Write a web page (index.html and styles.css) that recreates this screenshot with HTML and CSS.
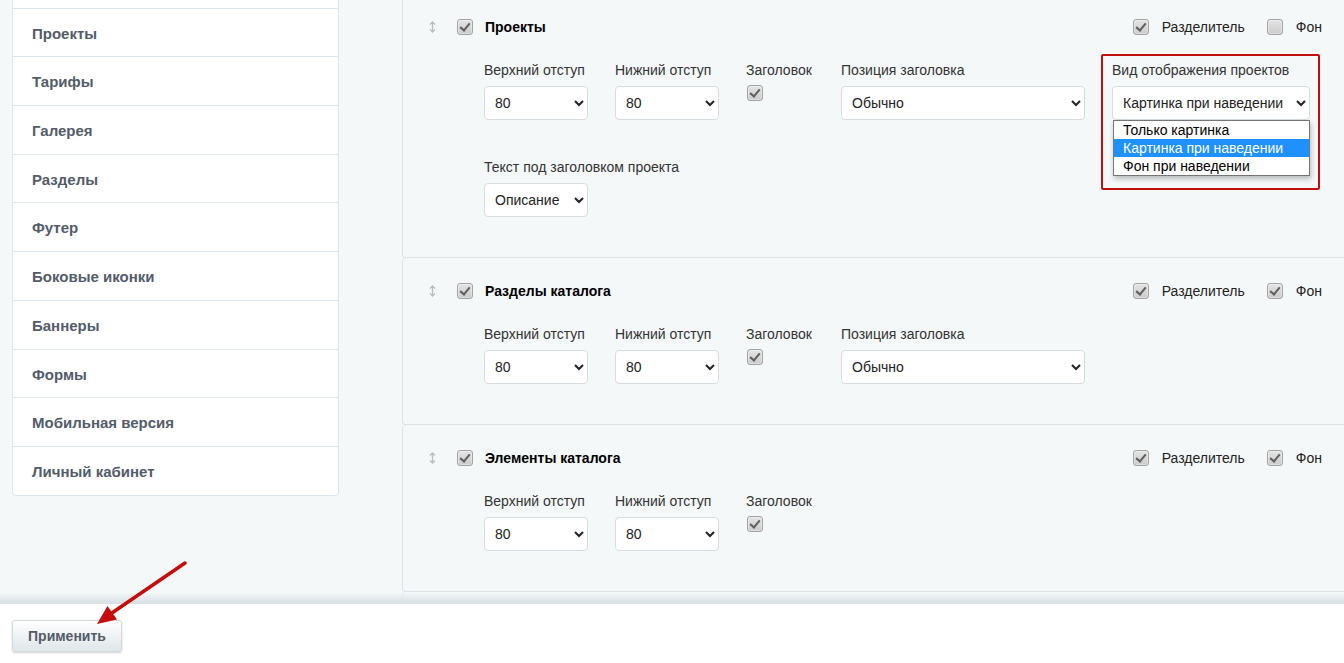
FILE: index.html
```html
<!DOCTYPE html>
<html lang="ru">
<head>
    <meta charset="UTF-8">
    <meta name="viewport" content="width=device-width, initial-scale=1.0">
    <title>Настройки блоков</title>
    <link rel="stylesheet" href="styles.css">
</head>
<body>
    <div class="workspace">
        <!-- Left menu -->
        <aside class="sidebar">
            <ul class="menu">
                <li class="menu-prev"></li>
                <li>Проекты</li>
                <li>Тарифы</li>
                <li>Галерея</li>
                <li>Разделы</li>
                <li>Футер</li>
                <li>Боковые иконки</li>
                <li>Баннеры</li>
                <li>Формы</li>
                <li>Мобильная версия</li>
                <li>Личный кабинет</li>
            </ul>
        </aside>

        <!-- Blocks list -->
        <main class="blocks">
            <section class="block">
                <div class="block-head">
                    <svg class="drag" width="7" height="12" viewBox="0 0 7 12"><path d="M3.5 1v10M1 3.5l2.5-2.5 2.5 2.5M1 8.5l2.5 2.5 2.5-2.5" fill="none" stroke="#bcbcbc" stroke-width="1.3"/></svg>
                    <span class="check checked"></span>
                    <span class="block-title">Проекты</span>
                    <div class="block-opts">
                        <label class="opt"><span class="check checked"></span>Разделитель</label>
                        <label class="opt"><span class="check"></span>Фон</label>
                    </div>
                </div>
                <div class="fields">
                    <div class="field">
                        <label>Верхний отступ</label>
                        <select class="sel-sm"><option>80</option></select>
                    </div>
                    <div class="field">
                        <label>Нижний отступ</label>
                        <select class="sel-sm"><option>80</option></select>
                    </div>
                    <div class="field field-flag">
                        <label>Заголовок</label>
                        <span class="check checked"></span>
                    </div>
                    <div class="field">
                        <label>Позиция заголовка</label>
                        <select class="sel-lg"><option>Обычно</option></select>
                    </div>
                    <div class="field marked">
                        <label>Вид отображения проектов</label>
                        <select class="sel-md"><option>Картинка при наведении</option></select>
                        <ul class="dropdown">
                            <li>Только картинка</li>
                            <li class="active">Картинка при наведении</li>
                            <li>Фон при наведении</li>
                        </ul>
                        <span class="mark-box"></span>
                    </div>
                    <div class="field">
                        <label>Текст под заголовком проекта</label>
                        <select class="sel-sm"><option>Описание</option></select>
                    </div>
                </div>
            </section>

            <section class="block">
                <div class="block-head">
                    <svg class="drag" width="7" height="12" viewBox="0 0 7 12"><path d="M3.5 1v10M1 3.5l2.5-2.5 2.5 2.5M1 8.5l2.5 2.5 2.5-2.5" fill="none" stroke="#bcbcbc" stroke-width="1.3"/></svg>
                    <span class="check checked"></span>
                    <span class="block-title">Разделы каталога</span>
                    <div class="block-opts">
                        <label class="opt"><span class="check checked"></span>Разделитель</label>
                        <label class="opt"><span class="check checked"></span>Фон</label>
                    </div>
                </div>
                <div class="fields">
                    <div class="field">
                        <label>Верхний отступ</label>
                        <select class="sel-sm"><option>80</option></select>
                    </div>
                    <div class="field">
                        <label>Нижний отступ</label>
                        <select class="sel-sm"><option>80</option></select>
                    </div>
                    <div class="field field-flag">
                        <label>Заголовок</label>
                        <span class="check checked"></span>
                    </div>
                    <div class="field">
                        <label>Позиция заголовка</label>
                        <select class="sel-lg"><option>Обычно</option></select>
                    </div>
                </div>
            </section>

            <section class="block">
                <div class="block-head">
                    <svg class="drag" width="7" height="12" viewBox="0 0 7 12"><path d="M3.5 1v10M1 3.5l2.5-2.5 2.5 2.5M1 8.5l2.5 2.5 2.5-2.5" fill="none" stroke="#bcbcbc" stroke-width="1.3"/></svg>
                    <span class="check checked"></span>
                    <span class="block-title">Элементы каталога</span>
                    <div class="block-opts">
                        <label class="opt"><span class="check checked"></span>Разделитель</label>
                        <label class="opt"><span class="check checked"></span>Фон</label>
                    </div>
                </div>
                <div class="fields">
                    <div class="field">
                        <label>Верхний отступ</label>
                        <select class="sel-sm"><option>80</option></select>
                    </div>
                    <div class="field">
                        <label>Нижний отступ</label>
                        <select class="sel-sm"><option>80</option></select>
                    </div>
                    <div class="field field-flag">
                        <label>Заголовок</label>
                        <span class="check checked"></span>
                    </div>
                </div>
            </section>

            <section class="block block-next"></section>
        </main>
    </div>

    <footer class="footer">
        <button class="btn-apply">Применить</button>
    </footer>

    <!-- pointer to the apply button -->
    <svg class="pointer" width="200" height="80" viewBox="0 0 200 80">
        <line x1="185" y1="3" x2="106" y2="57" stroke="#c40d0d" stroke-width="3.5" stroke-linecap="round"/>
        <polygon points="97,64 117,59.5 107.5,46" fill="#c40d0d"/>
    </svg>
</body>
</html>
```

FILE: styles.css
```css
body {
    margin: 0;
    height: 663px;
    overflow: hidden;
    background: #f5f8f9;
    font-family: "Liberation Sans", Arial, sans-serif;
    font-size: 14px;
    color: #222;
    position: relative;
}
.workspace {
    display: flex;
    height: 603px;
    overflow: hidden;
}

/* left menu */
.sidebar {
    width: 390px;
    padding-left: 12px;
    flex-shrink: 0;
}
.menu {
    list-style: none;
    margin: -41px 0 0;
    padding: 0;
    width: 325px;
    background: #fff;
    border: 1px solid #dde6ec;
    border-radius: 0 0 4px 4px;
}
.menu li {
    height: 47.7px;
    line-height: 49px;
    padding-left: 19px;
    border-top: 1px solid #dde6ec;
    font-size: 15px;
    font-weight: bold;
    color: #535c69;
}
.menu li:first-child {
    border-top: none;
}

/* blocks */
.blocks {
    flex: 1;
    margin-top: -6px;
}
.block {
    border-left: 1px solid #dbe3e8;
    border-bottom: 1px solid #dbe3e8;
    border-radius: 4px 0 0 4px;
    padding: 25px 0 40px;
}
.block-next {
    height: 60px;
}
.block-head {
    display: flex;
    align-items: center;
    height: 16px;
    padding: 0 22px 0 26px;
}
.drag {
    margin-right: 21px;
}
.block-title {
    margin-left: 12px;
    font-weight: bold;
    color: #000;
}
.block-opts {
    display: flex;
    gap: 22px;
    margin-left: auto;
}
.opt {
    display: flex;
    align-items: center;
    gap: 13px;
    color: #222;
}

/* checkbox look */
.check {
    display: inline-block;
    width: 14px;
    height: 14px;
    border: 1px solid #a3a3a3;
    border-radius: 3px;
    background: linear-gradient(#e4e4e4, #cbcbcb);
    box-shadow: inset 0 0 0 1px rgba(255, 255, 255, 0.35);
    position: relative;
    flex-shrink: 0;
}
.check.checked::after {
    content: "";
    position: absolute;
    left: 4px;
    top: 1px;
    width: 4px;
    height: 8px;
    border: solid #5e5e5e;
    border-width: 0 2px 2px 0;
    transform: rotate(40deg);
}

.fields {
    display: flex;
    flex-wrap: wrap;
    column-gap: 27px;
    row-gap: 38px;
    padding: 0 22px 0 81px;
    margin-top: 26px;
}
.field {
    display: flex;
    flex-direction: column;
    align-items: flex-start;
}
.field-flag {
    min-width: 68px;
}
.field label {
    line-height: 18px;
    margin-bottom: 7px;
    color: #333;
}
.field .check {
    margin-left: 1px;
    margin-top: -1px;
}
select {
    height: 34px;
    padding: 0 6px;
    background: #fff;
    border: 1px solid #d5dde2;
    border-radius: 4px;
    font-family: "Liberation Sans", Arial, sans-serif;
    font-size: 14px;
    color: #222;
}
.sel-sm {
    width: 104px;
}
.sel-lg {
    width: 244px;
}
.sel-md {
    width: 198px;
}

/* open list under the projects view select */
.marked {
    position: relative;
}
.dropdown {
    position: absolute;
    top: 100%;
    left: 1px;
    width: 195px;
    margin: 0;
    padding: 0;
    list-style: none;
    background: #fff;
    border: 1px solid #767676;
    box-shadow: 1px 3px 5px rgba(0, 0, 0, 0.25);
    z-index: 2;
}
.dropdown li {
    height: 18px;
    line-height: 18px;
    padding-left: 9px;
    color: #000;
}
.dropdown li.active {
    background: #1e90ff;
    color: #fff;
}
.mark-box {
    position: absolute;
    left: -11px;
    top: -7px;
    right: -10px;
    bottom: -70px;
    border: 2px solid #c40d0d;
    border-radius: 2px;
    z-index: 3;
}

/* bottom bar */
.footer {
    position: relative;
    height: 60px;
    background: #fff;
    border-top: 1px solid #d9e2e7;
    box-sizing: border-box;
    padding: 16px 12px 0;
}
.footer::before {
    content: "";
    position: absolute;
    left: 0;
    right: 0;
    top: -11px;
    height: 10px;
    background: linear-gradient(rgba(240, 244, 245, 0.4), #d8e0e4);
}
.btn-apply {
    width: 110px;
    height: 32px;
    border: 1px solid #d3dadd;
    border-radius: 3px;
    background: linear-gradient(#ffffff, #dfe6e9);
    box-shadow: 0 1px 2px rgba(0, 0, 0, 0.18);
    font-family: "Liberation Sans", Arial, sans-serif;
    font-size: 14px;
    font-weight: bold;
    color: #535c69;
    cursor: pointer;
}
.pointer {
    position: absolute;
    left: 0;
    top: 560px;
    z-index: 5;
}
```
